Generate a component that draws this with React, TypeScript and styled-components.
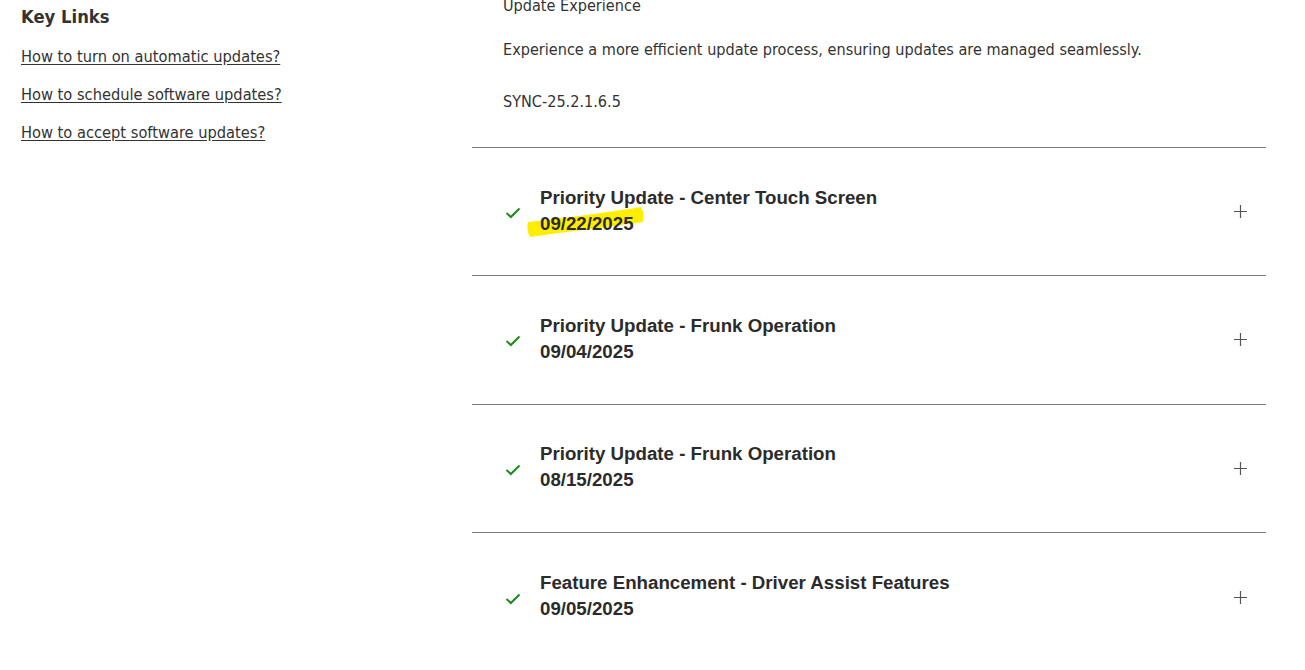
import React from "react";
import styled, { createGlobalStyle } from "styled-components";

const GlobalStyle = createGlobalStyle`
  html, body {
    margin: 0;
    padding: 0;
    background: #fff;
    overflow: hidden;
  }
  body {
    font-family: "DejaVu Sans Condensed", "Liberation Sans", sans-serif;
    color: #333;
  }
`;

interface Update {
  title: string;
  date: string;
  highlight?: boolean;
}

const updates: Update[] = [
  { title: "Priority Update - Center Touch Screen", date: "09/22/2025", highlight: true },
  { title: "Priority Update - Frunk Operation", date: "09/04/2025" },
  { title: "Priority Update - Frunk Operation", date: "08/15/2025" },
  { title: "Feature Enhancement - Driver Assist Features", date: "09/05/2025" },
];

const links = [
  "How to turn on automatic updates?",
  "How to schedule software updates?",
  "How to accept software updates?",
];

const Page = styled.div`
  display: grid;
  grid-template-columns: 472px 794px;
  margin-top: -6px;
`;

const Sidebar = styled.aside`
  padding: 11px 0 0 21px;
`;

const SideTitle = styled.h2`
  margin: 0 0 17px;
  font-size: 18.3px;
  font-weight: 700;
  line-height: 24px;
  color: #333;
`;

const LinkList = styled.ul`
  list-style: none;
  margin: 0;
  padding: 0;
  display: flex;
  flex-direction: column;
  gap: 17px;
`;

const KeyLink = styled.a`
  font-size: 16.3px;
  line-height: 21px;
  color: #333;
  text-decoration: underline;
  text-underline-offset: 2px;
  cursor: pointer;
`;

const Main = styled.main`
  display: flex;
  flex-direction: column;
`;

const Intro = styled.div`
  padding: 0 0 33px 31px;
  border-bottom: 1px solid #7a7a7a;
  font-size: 16.1px;
  line-height: 24px;
`;

const Para = styled.p<{ $gap?: number }>`
  margin: 0 0 ${(p) => p.$gap ?? 0}px;
`;

const Row = styled.div`
  display: flex;
  align-items: center;
  height: 128.3px;
  border-bottom: 1px solid #7a7a7a;
  padding: 0 19px 2px 31px;
  box-sizing: border-box;
  cursor: pointer;

  &:last-child {
    border-bottom: none;
  }
`;

const Check = styled.span`
  width: 18px;
  display: flex;
  margin: 5px 19px 0 2px;
  color: #1a8a1a;
`;

const Texts = styled.div`
  flex: 1;
  margin-left: -2px;
  display: flex;
  flex-direction: column;
  font-family: "Liberation Sans", Arial, sans-serif;
  font-weight: 700;
  font-size: 18.7px;
  line-height: 26px;
  color: #2b2b2b;
`;

const DateText = styled.span`
  position: relative;
  align-self: flex-start;
  z-index: 0;
`;

const Marker = styled.svg`
  position: absolute;
  left: -15px;
  top: -6px;
  width: 122px;
  height: 34px;
  z-index: -1;
  pointer-events: none;
`;

const Plus = styled.span`
  display: flex;
  margin-top: 2px;
  color: #555;
`;

const CheckIcon = () => (
  <svg width="16" height="16" viewBox="0 0 16 16" fill="none">
    <path d="M1.5 8 L5.8 12 L14.5 3.5" stroke="currentColor" strokeWidth="2" />
  </svg>
);

const PlusIcon = () => (
  <svg width="13" height="13" viewBox="0 0 13 13" fill="none">
    <path d="M6.5 0 V13 M0 6.5 H13" stroke="currentColor" strokeWidth="1.2" />
  </svg>
);

const App = () => (
  <>
    <GlobalStyle />
    <Page>
      <Sidebar>
        <SideTitle>Key Links</SideTitle>
        <LinkList>
          {links.map((l) => (
            <li key={l}>
              <KeyLink>{l}</KeyLink>
            </li>
          ))}
        </LinkList>
      </Sidebar>
      <Main>
        <Intro>
          <Para $gap={20}>Update Experience</Para>
          <Para $gap={28}>
            Experience a more efficient update process, ensuring updates are managed seamlessly.
          </Para>
          <Para>SYNC-25.2.1.6.5</Para>
        </Intro>
        {updates.map((u, i) => (
          <Row key={i}>
            <Check>
              <CheckIcon />
            </Check>
            <Texts>
              <span>{u.title}</span>
              <DateText>
                {u.highlight && (
                  <Marker viewBox="0 0 122 34">
                    <path
                      d="M3 17 C40 13 80 8 116 2 Q120 9 118 17 C80 22 40 27 5 32 Q1 25 3 17 Z"
                      fill="#ffee00"
                    />
                  </Marker>
                )}
                {u.date}
              </DateText>
            </Texts>
            <Plus>
              <PlusIcon />
            </Plus>
          </Row>
        ))}
      </Main>
    </Page>
  </>
);

export default App;
